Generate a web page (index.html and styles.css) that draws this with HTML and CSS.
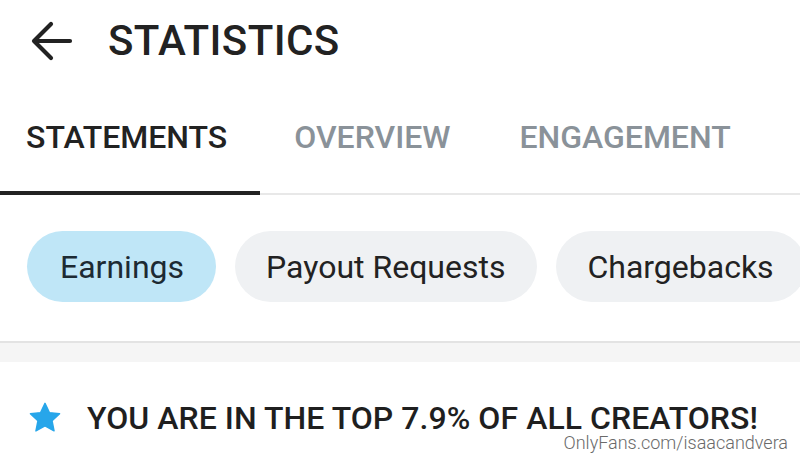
FILE: index.html
```html
<!DOCTYPE html>
<html lang="en">
<head>
<meta charset="utf-8">
<title>Statistics</title>
<link rel="stylesheet" href="styles.css">
</head>
<body>
<div class="screen">
  <header class="topbar">
    <svg class="back" width="44" height="44" viewBox="0 0 44 44" aria-hidden="true">
      <path d="M40 22H5M21 5L4 22l17 17" fill="none" stroke="#222" stroke-width="4.2" stroke-linecap="round" stroke-linejoin="round"/>
    </svg>
    <h1 class="title">STATISTICS</h1>
  </header>

  <nav class="tabs">
    <div class="tab active">STATEMENTS</div>
    <div class="tab">OVERVIEW</div>
    <div class="tab">ENGAGEMENT</div>
    <div class="tab">REACH</div>
  </nav>

  <div class="chips">
    <div class="chip selected">Earnings</div>
    <div class="chip">Payout Requests</div>
    <div class="chip">Chargebacks</div>
  </div>

  <div class="divider"></div>

  <div class="rank">
    <svg class="star" width="34" height="34" viewBox="0 0 24 24" aria-hidden="true">
      <path d="M12 1.6l3.1 6.6 7.2.8-5.3 5 1.4 7.1L12 17.6l-6.4 3.5 1.4-7.1-5.3-5 7.2-.8z" fill="#27a6ea" stroke="#27a6ea" stroke-width="1" stroke-linejoin="round"/>
    </svg>
    <span class="rank-text">YOU ARE IN THE TOP 7.9% OF ALL CREATORS!</span>
  </div>

  <div class="watermark">OnlyFans.com/isaacandvera</div>
</div>
</body>
</html>
```

FILE: styles.css
```css
* {
  box-sizing: border-box;
}

html, body {
  margin: 0;
  padding: 0;
  background: #fff;
}

body {
  font-family: Roboto, "Liberation Sans", sans-serif;
  color: #222;
}

.screen {
  position: relative;
  width: 800px;
  height: 465px;
  overflow: hidden;
}

/* top app bar */
.topbar {
  display: flex;
  align-items: center;
  height: 82px;
  padding-left: 30px;
}

.back {
  flex: none;
  margin-top: -1px;
}

.title {
  margin: 0 0 0 34px;
  font-size: 42px;
  font-weight: 500;
  letter-spacing: 0.4px;
  color: #222;
  line-height: 1;
}

/* tab strip */
.tabs {
  display: flex;
  height: 113px;
  border-bottom: 2px solid #e8e8e8;
  white-space: nowrap;
}

.tab {
  flex: none;
  display: flex;
  align-items: center;
  padding: 0 35px 0 34px;
  margin-bottom: -2px;
  border-bottom: 4px solid transparent;
  font-size: 32px;
  font-weight: 500;
  color: #8a9299;
}

.tab.active {
  color: #222;
  border-bottom-color: #222;
  padding: 0 33px 0 26px;
}

/* filter chips */
.chips {
  display: flex;
  gap: 19px;
  padding: 36px 0 0 27px;
  height: 146px;
  white-space: nowrap;
}

.chip {
  flex: none;
  height: 71px;
  border-radius: 36px;
  padding: 0 32px 0 31px;
  display: flex;
  align-items: center;
  background: #eff1f3;
  font-size: 32px;
  color: #222;
}

.chip.selected {
  background: #bfe6f7;
  color: #1c2a33;
  padding: 0 32px 0 33px;
}

/* grey section separator */
.divider {
  height: 21px;
  background: #f5f5f5;
  border-top: 2px solid #e3e3e3;
}

/* creator rank banner */
.rank {
  display: flex;
  align-items: center;
  height: 75px;
  padding: 36px 0 0 28px;
}

.star {
  flex: none;
}

.rank-text {
  margin-left: 25px;
  font-size: 32px;
  line-height: 32px;
  font-weight: 500;
  letter-spacing: 0.05px;
  color: #1f1f1f;
}

.watermark {
  position: absolute;
  right: 12px;
  top: 433px;
  font-size: 18px;
  line-height: 20px;
  font-weight: 300;
  color: #6a6a6a;
}
```
